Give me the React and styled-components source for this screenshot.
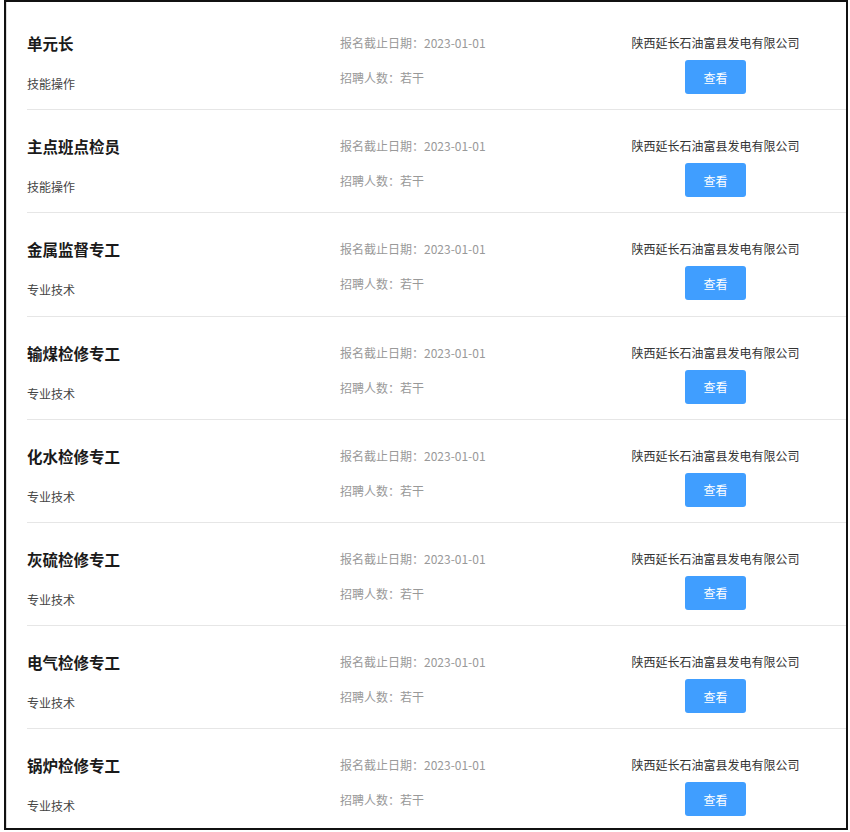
import styled, { createGlobalStyle } from "styled-components";

const GlobalStyle = createGlobalStyle`
  html, body {
    margin: 0;
    padding: 0;
    background: #ffffff;
    font-family: "Noto Sans CJK SC", "Noto Sans", sans-serif;
  }
`;

const FRAME = styled.div`
  box-sizing: border-box;
  margin-left: 4px;
  width: 844px;
  height: 830px;
  border: 2px solid #111;
  box-shadow: inset 1px 0 0 #dcdcdc;
  padding: 5px 0 0 21px;
  overflow: hidden;
`;

const ROW = styled.div`
  display: grid;
  grid-template-columns: 313px 275px 201px;
  height: 103.2px;
  box-sizing: border-box;
  border-bottom: 1px solid #e6e6e6;
  padding-top: 27px;
`;

const LEFT = styled.div`
  display: flex;
  flex-direction: column;
`;

const TITLE = styled.div`
  font-size: 15.5px;
  font-weight: 700;
  color: #1a1a1a;
  line-height: 18px;
`;

const SUB = styled.div`
  margin-top: 22px;
  font-size: 12px;
  color: #444;
  line-height: 20px;
`;

const META = styled.div`
  display: flex;
  flex-direction: column;
  gap: 17px;
  font-size: 12px;
  color: #999;
  line-height: 18px;
`;

const RIGHT = styled.div`
  display: flex;
  flex-direction: column;
  align-items: center;
`;

const COMPANY = styled.div`
  font-size: 12px;
  color: #333;
  line-height: 18px;
`;

const BUTTON = styled.button`
  margin-top: 8px;
  width: 61px;
  height: 34px;
  border: none;
  border-radius: 3px;
  background: #409eff;
  color: #fff;
  font-family: inherit;
  font-size: 12px;
  cursor: pointer;
`;

const jobs = [
  { title: "单元长", type: "技能操作" },
  { title: "主点班点检员", type: "技能操作" },
  { title: "金属监督专工", type: "专业技术" },
  { title: "输煤检修专工", type: "专业技术" },
  { title: "化水检修专工", type: "专业技术" },
  { title: "灰硫检修专工", type: "专业技术" },
  { title: "电气检修专工", type: "专业技术" },
  { title: "锅炉检修专工", type: "专业技术" },
];

export default function App() {
  return (
    <>
      <GlobalStyle />
      <FRAME>
        {jobs.map((job, i) => (
          <ROW key={i}>
            <LEFT>
              <TITLE>{job.title}</TITLE>
              <SUB>{job.type}</SUB>
            </LEFT>
            <META>
              <div>报名截止日期：2023-01-01</div>
              <div>招聘人数：若干</div>
            </META>
            <RIGHT>
              <COMPANY>陕西延长石油富县发电有限公司</COMPANY>
              <BUTTON>查看</BUTTON>
            </RIGHT>
          </ROW>
        ))}
      </FRAME>
    </>
  );
}
